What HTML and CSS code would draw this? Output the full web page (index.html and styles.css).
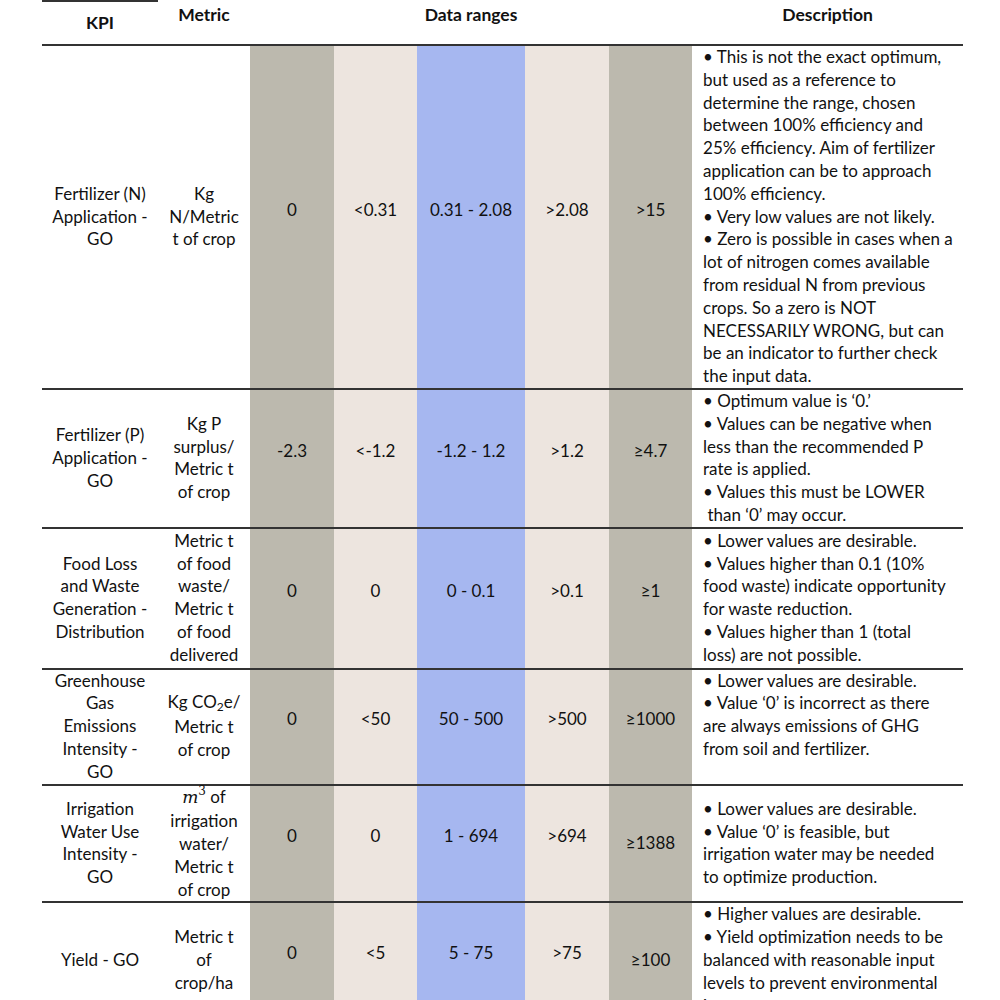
FILE: index.html
```html
<!DOCTYPE html>
<html lang="en">
<head>
<meta charset="utf-8">
<title>KPI data ranges</title>
<link rel="stylesheet" href="styles.css">
</head>
<body>
<div class="page">
<table class="kpi">
  <colgroup>
    <col class="c-kpi"><col class="c-metric"><col class="c-d1"><col class="c-d2"><col class="c-d3"><col class="c-d4"><col class="c-d5"><col class="c-desc">
  </colgroup>
  <thead>
    <tr>
      <th class="h-kpi">KPI</th>
      <th class="h-top">Metric</th>
      <th class="h-top" colspan="5">Data ranges</th>
      <th class="h-top h-desc">Description</th>
    </tr>
  </thead>
  <tbody>
    <tr>
      <td class="kpi-name">Fertilizer (N)<br>Application -<br>GO</td>
      <td class="metric">Kg<br>N/Metric<br>t of crop</td>
      <td class="v grey">0</td>
      <td class="v beige">&lt;0.31</td>
      <td class="v blue">0.31 - 2.08</td>
      <td class="v beige">&gt;2.08</td>
      <td class="v grey">&gt;15</td>
      <td class="desc">• This is not the exact optimum,<br>but used as a reference to<br>determine the range, chosen<br>between 100% efficiency and<br>25% efficiency. Aim of fertilizer<br>application can be to approach<br>100% efficiency.<br>• Very low values are not likely.<br>• Zero is possible in cases when a<br>lot of nitrogen comes available<br>from residual N from previous<br>crops. So a zero is NOT<br>NECESSARILY WRONG, but can<br>be an indicator to further check<br>the input data.</td>
    </tr>
    <tr>
      <td class="kpi-name">Fertilizer (P)<br>Application -<br>GO</td>
      <td class="metric">Kg P<br>surplus/<br>Metric t<br>of crop</td>
      <td class="v grey">-2.3</td>
      <td class="v beige">&lt;-1.2</td>
      <td class="v blue">-1.2 - 1.2</td>
      <td class="v beige">&gt;1.2</td>
      <td class="v grey">≥4.7</td>
      <td class="desc">• Optimum value is ‘0.’<br>• Values can be negative when<br>less than the recommended P<br>rate is applied.<br>• Values this must be LOWER<br>&nbsp;than ‘0’ may occur.</td>
    </tr>
    <tr>
      <td class="kpi-name">Food Loss<br>and Waste<br>Generation -<br>Distribution</td>
      <td class="metric">Metric t<br>of food<br>waste/<br>Metric t<br>of food<br>delivered</td>
      <td class="v grey">0</td>
      <td class="v beige">0</td>
      <td class="v blue">0 - 0.1</td>
      <td class="v beige">&gt;0.1</td>
      <td class="v grey">≥1</td>
      <td class="desc desc-pad">• Lower values are desirable.<br>• Values higher than 0.1 (10%<br>food waste) indicate opportunity<br>for waste reduction.<br>• Values higher than 1 (total<br>loss) are not possible.</td>
    </tr>
    <tr>
      <td class="kpi-name">Greenhouse<br>Gas<br>Emissions<br>Intensity -<br>GO</td>
      <td class="metric">Kg CO<span class="sub">2</span>e/<br>Metric t<br>of crop</td>
      <td class="v grey">0</td>
      <td class="v beige">&lt;50</td>
      <td class="v blue">50 - 500</td>
      <td class="v beige">&gt;500</td>
      <td class="v grey">≥1000</td>
      <td class="desc desc-top">• Lower values are desirable.<br>• Value ‘0’ is incorrect as there<br>are always emissions of GHG<br>from soil and fertilizer.</td>
    </tr>
    <tr>
      <td class="kpi-name">Irrigation<br>Water Use<br>Intensity -<br>GO</td>
      <td class="metric"><i class="math">m</i><span class="sup">3</span> of<br>irrigation<br>water/<br>Metric t<br>of crop</td>
      <td class="v grey">0</td>
      <td class="v beige">0</td>
      <td class="v blue">1 - 694</td>
      <td class="v beige">&gt;694</td>
      <td class="v grey v-mid">≥1388</td>
      <td class="desc">• Lower values are desirable.<br>• Value ‘0’ is feasible, but<br>irrigation water may be needed<br>to optimize production.</td>
    </tr>
    <tr>
      <td class="kpi-name">Yield - GO</td>
      <td class="metric">Metric t<br>of<br>crop/ha</td>
      <td class="v grey">0</td>
      <td class="v beige">&lt;5</td>
      <td class="v blue">5 - 75</td>
      <td class="v beige">&gt;75</td>
      <td class="v grey v-mid">≥100</td>
      <td class="desc">• Higher values are desirable.<br>• Yield optimization needs to be<br>balanced with reasonable input<br>levels to prevent environmental<br>impacts.</td>
    </tr>
  </tbody>
</table>
</div>
</body>
</html>
```

FILE: styles.css
```css
html, body {
  margin: 0;
  padding: 0;
  background: #ffffff;
}

.page {
  padding-left: 42px;
  overflow: hidden;
  height: 1000px;
}

.kpi {
  border-collapse: collapse;
  table-layout: fixed;
  width: 921px;
  font-family: "Lato", "Open Sans", sans-serif;
  font-size: 17px;
  line-height: 22.8px;
  color: #111111;
}

.c-kpi { width: 116px; }
.c-metric { width: 92px; }
.c-d1 { width: 84px; }
.c-d2 { width: 83px; }
.c-d3 { width: 108px; }
.c-d4 { width: 84px; }
.c-d5 { width: 83px; }
.c-desc { width: 271px; }

.kpi th {
  height: 40px;
  padding: 0;
  font-weight: 700;
  font-size: 17.5px;
  text-align: center;
  border-bottom: 2px solid #333333;
}

.h-kpi {
  vertical-align: middle;
  border-top: 2px solid #333333;
  padding-top: 2px;
}

.h-top {
  vertical-align: top;
  padding-top: 3px !important;
}

.kpi td {
  padding: 0;
  border-bottom: 2px solid #333333;
  text-align: center;
  vertical-align: middle;
}

.kpi td.desc {
  text-align: left;
  white-space: nowrap;
  padding-left: 11px;
}

.kpi td.desc-pad {
  padding-top: 1px;
  padding-bottom: 1px;
}

.kpi td.desc-top {
  vertical-align: top;
}

.kpi td.v {
  padding-bottom: 14px;
}

.kpi td.v-mid {
  padding-bottom: 0;
}

.grey { background: #bcb9ae; }
.beige { background: #ede5df; }
.blue { background: #a6b7f0; }

.math {
  font-family: "DejaVu Serif", "Liberation Serif", serif;
  font-size: 17px;
}

.sup {
  font-family: "DejaVu Serif", "Liberation Serif", serif;
  font-size: 12px;
  position: relative;
  top: -0.6em;
}

.sub {
  font-size: 12px;
  position: relative;
  top: 0.25em;
}
```
